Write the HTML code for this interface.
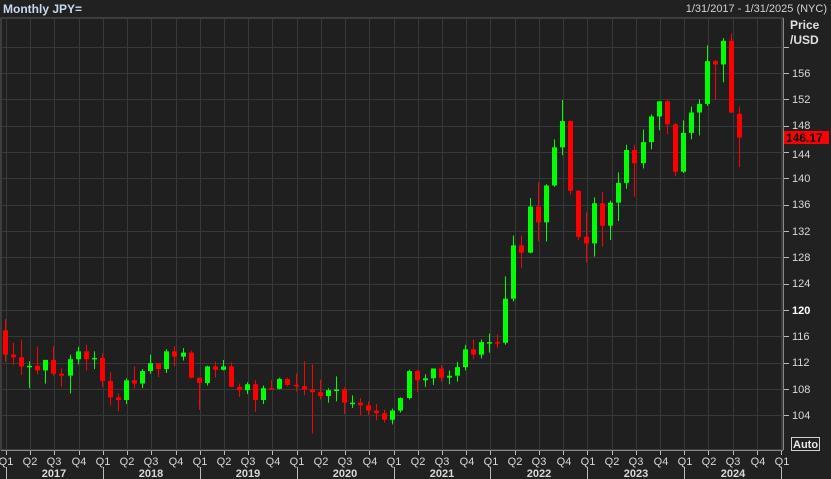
<!DOCTYPE html>
<html><head><meta charset="utf-8"><style>
html,body{margin:0;padding:0;background:#222222;width:831px;height:479px;overflow:hidden}
svg{display:block;font-family:"Liberation Sans",sans-serif}
</style></head><body>
<svg id="s" width="831" height="479" xmlns="http://www.w3.org/2000/svg">
<rect x="0" y="0" width="831" height="479" fill="#212121"/>
<rect x="1" y="18" width="782" height="432" fill="#1f1f1f" stroke="#5a5a5a" stroke-width="1"/>
<g id="grid"></g>
<g id="candles"></g>
<text x="3" y="13" fill="#c8d8f0" font-size="12" font-weight="bold">Monthly JPY=</text>
<text x="827" y="12" fill="#d0d0d0" font-size="11" text-anchor="end">1/31/2017 - 1/31/2025 (NYC)</text>
<text x="790" y="29" fill="#e0e0e0" font-size="12" font-weight="bold">Price</text>
<text x="790" y="44" fill="#e0e0e0" font-size="12" font-weight="bold">/USD</text>
<g id="yax" fill="#d8d8d8" font-size="11"></g>
<rect x="784" y="131" width="45" height="13" fill="#ff0000"/>
<text x="786" y="142" fill="#000" font-size="12" font-weight="bold">146.17</text>
<rect x="791.5" y="437.5" width="28" height="13" fill="none" stroke="#d0d0d0"/>
<text x="793" y="448" fill="#e8e8e8" font-size="11" font-weight="bold">Auto</text>
<g id="xax" fill="#d8d8d8" font-size="11"></g>
<g fill="#d8d8d8" font-size="11" font-weight="bold" text-anchor="middle">
<text x="54" y="477">2017</text><text x="151" y="477">2018</text><text x="248" y="477">2019</text><text x="345" y="477">2020</text>
<text x="442" y="477">2021</text><text x="539" y="477">2022</text><text x="636" y="477">2023</text><text x="733" y="477">2024</text>
</g>
<g fill="#d8d8d8" font-size="11" text-anchor="middle">
<text x="6" y="465">Q1</text><text x="30" y="465">Q2</text><text x="54" y="465">Q3</text><text x="79" y="465">Q4</text>
<text x="103" y="465">Q1</text><text x="127" y="465">Q2</text><text x="151" y="465">Q3</text><text x="176" y="465">Q4</text>
<text x="200" y="465">Q1</text><text x="224" y="465">Q2</text><text x="248" y="465">Q3</text><text x="273" y="465">Q4</text>
<text x="297" y="465">Q1</text><text x="321" y="465">Q2</text><text x="345" y="465">Q3</text><text x="370" y="465">Q4</text>
<text x="394" y="465">Q1</text><text x="418" y="465">Q2</text><text x="442" y="465">Q3</text><text x="467" y="465">Q4</text>
<text x="491" y="465">Q1</text><text x="515" y="465">Q2</text><text x="539" y="465">Q3</text><text x="564" y="465">Q4</text>
<text x="588" y="465">Q1</text><text x="612" y="465">Q2</text><text x="636" y="465">Q3</text><text x="661" y="465">Q4</text>
<text x="685" y="465">Q1</text><text x="709" y="465">Q2</text><text x="733" y="465">Q3</text><text x="758" y="465">Q4</text>
<text x="782" y="465">Q1</text>
</g>
<g fill="#d8d8d8" font-size="11">
<text x="792" y="77">156</text><text x="792" y="103">152</text><text x="792" y="129">148</text><text x="792" y="158">144</text>
<text x="792" y="182">140</text><text x="792" y="208">136</text><text x="792" y="235">132</text><text x="792" y="261">128</text>
<text x="792" y="287">124</text><text x="792" y="314" font-weight="bold" fill="#fff">120</text><text x="792" y="340">116</text><text x="792" y="366">112</text>
<text x="792" y="393">108</text><text x="792" y="419">104</text>
</g>
</svg>
<script>
var NS="http://www.w3.org/2000/svg";
function el(t,a,p){var e=document.createElementNS(NS,t);for(var k in a)e.setAttribute(k,a[k]);p.appendChild(e);return e;}
function y(p){return 73+(156-p)*6.58;}
var g=document.getElementById('grid');
for(var p=104;p<=160;p+=4){var yy=Math.round(y(p))+0.5;el('line',{x1:1,x2:783,y1:yy,y2:yy,stroke:'#383838'},g);
 el('line',{x1:783,x2:789,y1:yy,y2:yy,stroke:'#bbb'},g);}
for(var q=0;q<=32;q++){var xx=Math.round(6+q*24.22)+0.5;
 el('line',{x1:xx,x2:xx,y1:18,y2:450,stroke:'#383838'},g);
 el('line',{x1:xx,x2:xx,y1:450,y2:455,stroke:'#bbb'},g);
 if(q%4==0)el('line',{x1:xx,x2:xx,y1:467,y2:479,stroke:'#bbb'},g);}
el('line',{x1:1,x2:783,y1:450.5,y2:450.5,stroke:'#888'},g);
el('line',{x1:783.5,x2:783.5,y1:18,y2:450,stroke:'#888'},g);
var d=[
[116.9,118.6,112.1,113.2],[113.2,115.0,111.6,112.8],[112.8,115.5,110.1,111.4],[111.4,112.2,108.1,111.5],[111.5,114.4,110.2,110.8],[110.8,112.4,108.8,112.4],
[112.4,114.5,110.0,110.3],[110.3,111.1,108.3,110.0],[110.0,113.2,107.3,112.5],[112.5,114.4,111.7,113.7],[113.7,114.7,110.8,112.5],[112.5,113.7,111.0,112.7],
[112.7,113.4,108.3,109.2],[109.2,110.5,105.5,106.7],[106.7,107.3,104.6,106.3],[106.3,109.6,105.7,109.3],[109.3,111.4,108.1,108.8],[108.8,111.0,108.1,110.7],
[110.7,113.2,110.3,111.9],[111.9,111.8,109.8,111.0],[111.0,114.0,110.4,113.7],[113.7,114.5,111.4,112.9],[112.9,114.2,112.3,113.5],[113.5,113.8,109.6,109.7],
[109.7,109.7,104.8,108.9],[108.9,111.5,108.5,111.4],[111.4,112.1,109.7,110.9],[110.9,112.4,110.8,111.4],[111.4,112.0,108.3,108.3],[108.3,108.8,106.8,107.8],
[107.8,109.0,107.2,108.7],[108.7,109.3,104.5,106.3],[106.3,108.5,105.7,108.1],[108.1,109.3,107.9,108.0],[108.0,109.7,107.9,109.5],[109.5,109.7,108.4,108.6],
[108.6,110.3,107.6,108.4],[108.4,112.2,107.0,107.9],[107.9,111.7,101.2,107.5],[107.5,109.4,106.4,106.9],[106.9,108.1,105.9,107.8],[107.8,109.9,106.1,107.9],
[107.9,108.2,104.2,105.9],[105.9,107.0,105.1,105.9],[105.9,106.6,104.0,105.5],[105.5,106.1,104.0,104.7],[104.7,105.7,103.2,104.3],[104.3,104.8,102.9,103.3],
[103.3,105.0,102.6,104.7],[104.7,106.7,104.4,106.6],[106.6,110.9,106.4,110.7],[110.7,110.9,107.5,109.3],[109.3,110.2,108.3,109.6],[109.6,111.1,108.6,111.1],
[111.1,111.6,109.1,109.7],[109.7,110.8,108.7,110.0],[110.0,112.1,109.1,111.3],[111.3,114.7,110.8,114.0],[114.0,115.5,112.5,113.2],[113.2,115.5,112.6,115.1],
[115.1,116.4,113.5,115.1],[115.1,116.3,114.2,115.0],[115.0,125.1,114.7,121.7],[121.7,131.3,121.3,129.8],[129.8,131.3,126.4,128.7],[128.7,137.0,128.6,135.7],
[135.7,139.4,130.4,133.3],[133.3,139.1,130.4,138.9],[138.9,145.9,138.7,144.7],[144.7,151.9,143.5,148.7],[148.7,148.8,137.5,138.1],[138.1,138.2,130.6,131.1],
[131.1,134.8,127.2,130.1],[130.1,137.1,128.1,136.2],[136.2,137.9,129.6,132.8],[132.8,136.6,130.6,136.3],[136.3,140.9,133.5,139.3],[139.3,145.1,138.4,144.3],
[144.3,145.1,137.2,142.3],[142.3,147.4,141.5,145.5],[145.5,149.7,144.4,149.4],[149.4,151.7,147.3,151.7],[151.7,151.9,146.7,148.2],[148.2,148.4,140.3,141.0],
[141.0,148.8,140.8,146.9],[146.9,150.9,145.9,150.0],[150.0,152.0,146.5,151.3],[151.3,160.2,151.0,157.8],[157.8,158.0,151.9,157.3],[157.3,161.3,154.6,160.9],
[160.9,162.0,149.9,150.0],[149.8,150.9,141.7,146.2]];
var c=document.getElementById('candles');
d.forEach(function(r,i){var x=Math.round(5+i*8.07);var col=r[3]>=r[0]?'#00ff00':'#ff0000';
 el('rect',{x:x,y:y(r[1]),width:1,height:Math.max(1,y(r[2])-y(r[1])),fill:col},c);
 var t=y(Math.max(r[0],r[3])),b=y(Math.min(r[0],r[3]));
 el('rect',{x:x-2,y:t,width:5,height:Math.max(1.5,b-t),fill:col},c);});
</script>
</body></html>
